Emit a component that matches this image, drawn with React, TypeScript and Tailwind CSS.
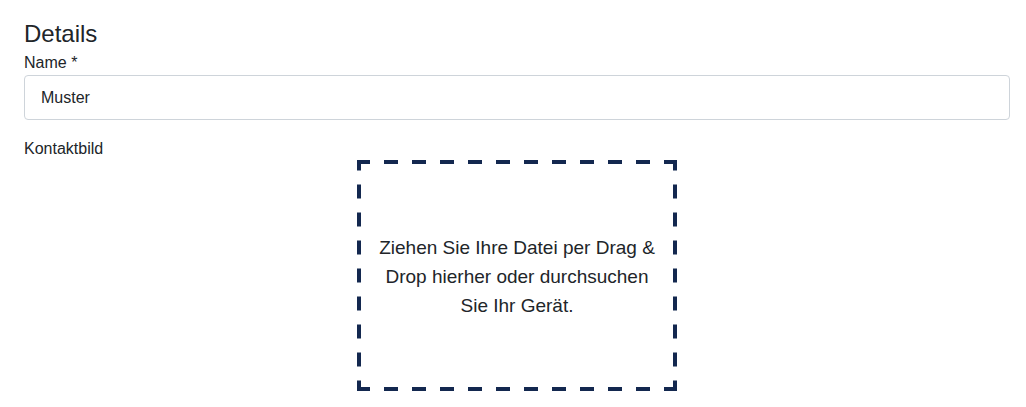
import React from "react";

// Dashed drop-zone frame: 14px dashes / 14px gaps, L-shaped corners.
function DashedFrame() {
  const stroke = "#13284f";
  return (
    <svg
      className="pointer-events-none absolute inset-0"
      width="320"
      height="231"
      viewBox="0 0 320 231"
    >
      <g stroke={stroke} strokeWidth="4" fill="none">
        <line x1="0" y1="2" x2="320" y2="2" strokeDasharray="14 14" strokeDashoffset="1" />
        <line x1="0" y1="229" x2="320" y2="229" strokeDasharray="14 14" strokeDashoffset="1" />
        <line x1="2" y1="0" x2="2" y2="231" strokeDasharray="14 14" strokeDashoffset="3.5" />
        <line x1="318" y1="0" x2="318" y2="231" strokeDasharray="14 14" strokeDashoffset="3.5" />
      </g>
    </svg>
  );
}

export default function App() {
  return (
    <div
      className="min-h-[407px] bg-white pl-6 pr-4 pt-[19px] text-[#212529]"
      style={{ fontFamily: '"Liberation Sans", Arial, sans-serif' }}
    >
      <h2 className="mb-[3px] text-[24px] leading-[29px] font-normal">Details</h2>

      <label className="block h-6 text-[16px] leading-6">Name *</label>
      <input
        type="text"
        defaultValue="Muster"
        className="block h-[45px] w-full rounded-[4px] border border-[#ced4da] px-4 pt-px text-[16px] leading-6 text-[#212529] outline-none"
      />

      <label className="mt-4 block h-6 pt-px text-[16px] leading-6">Kontaktbild</label>

      <div className="flex justify-center">
        <div className="relative flex h-[231px] w-[320px] items-center justify-center px-5 pt-[2px] text-center text-[19px] leading-[29px]">
          <DashedFrame />
          <p>Ziehen Sie Ihre Datei per Drag &amp; Drop hierher oder durchsuchen Sie Ihr Gerät.</p>
        </div>
      </div>
    </div>
  );
}
